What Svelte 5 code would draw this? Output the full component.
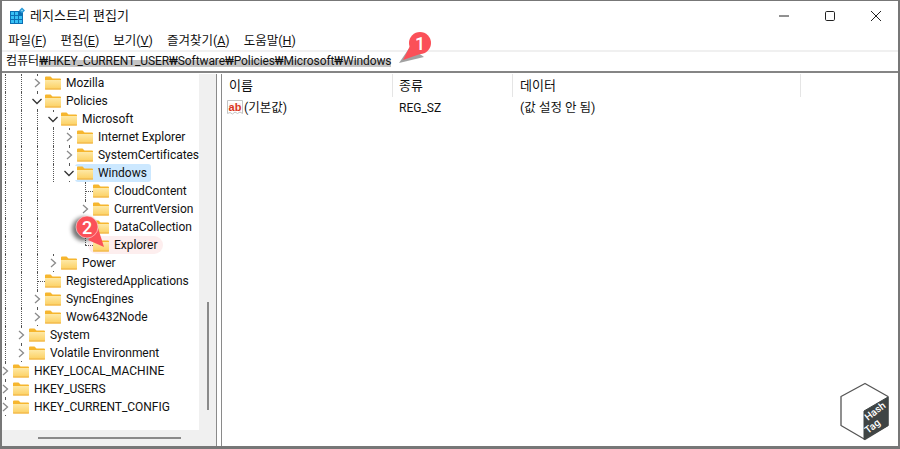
<script>
  // c = guide cells left of the folder: l line, n none, r chevron, o open chevron, t tee, e elbow
  const rows = [
    { c: 'llr', name: 'Mozilla' },
    { c: 'llo', name: 'Policies' },
    { c: 'lllo', name: 'Microsoft' },
    { c: 'llllr', name: 'Internet Explorer' },
    { c: 'llllr', name: 'SystemCertificates' },
    { c: 'llllo', name: 'Windows', cls: 'selected' },
    { c: 'lllnnt', name: 'CloudContent' },
    { c: 'lllnnr', name: 'CurrentVersion' },
    { c: 'lllnnt', name: 'DataCollection' },
    { c: 'lllnne', name: 'Explorer', cls: 'marked' },
    { c: 'lllr', name: 'Power' },
    { c: 'llt', name: 'RegisteredApplications' },
    { c: 'llr', name: 'SyncEngines' },
    { c: 'llr', name: 'Wow6432Node' },
    { c: 'lr', name: 'System' },
    { c: 'lr', name: 'Volatile Environment' },
    { c: 'r', name: 'HKEY_LOCAL_MACHINE' },
    { c: 'r', name: 'HKEY_USERS' },
    { c: 'r', name: 'HKEY_CURRENT_CONFIG' }
  ]
  const menus = [
    ['파일(', 'F', ')'],
    ['편집(', 'E', ')'],
    ['보기(', 'V', ')'],
    ['즐겨찾기(', 'A', ')'],
    ['도움말(', 'H', ')']
  ]
</script>

<div class="window">
  <header class="titlebar">
    <svg class="app-icon" width="16" height="17" viewBox="0 0 16 17">
      <rect x="1" y="4" width="13" height="13" fill="#0b6fb3" />
      <path d="M2 5h3v3H2zM6 5h3v3H6zM2 9h3v3H2zM6 9h3v3H6zM10 9h3v3h-3zM2 13h3v3H2zM6 13h3v3H6zM10 13h3v3h-3z" fill="#37c0f5" />
      <path d="M13 0.500l3 3-3 3-3-3z" fill="#2a9ad8" />
      <path d="M13 2.500l1 1-1 1-1-1z" fill="#a8e2fb" />
    </svg>
    <span class="title">레지스트리 편집기</span>
    <div class="controls">
      <svg width="10" height="10" viewBox="0 0 10 10"><path d="M0 5h10" stroke="#222" /></svg>
      <svg width="10" height="10" viewBox="0 0 10 10"><rect x=".5" y=".5" width="9" height="9" rx="1.2" fill="none" stroke="#222" /></svg>
      <svg width="10" height="10" viewBox="0 0 10 10"><path d="M0 0l10 10M10 0L0 10" stroke="#222" /></svg>
    </div>
  </header>

  <nav class="menubar">
    {#each menus as m}
      <span class="menu">{m[0]}<u>{m[1]}</u>{m[2]}</span>
    {/each}
  </nav>

  <div class="address">
    <span>컴퓨터</span><span class="marker">₩HKEY_CURRENT_USER₩Software₩Policies₩Microsoft₩Windows</span>
  </div>

  <main class="panes">
    <section class="tree">
      <div class="tree-view">
        <div class="tree-rows">
          {#each rows as row}
            <div class="row">
              {#each row.c.split('') as cell}
                <span class="cell {cell}">
                  {#if cell === 'r'}
                    <svg width="16" height="14" viewBox="0 0 16 14"><rect width="16" height="14" fill="#fff" /><path d="M6 3l4.500 4L6 11" fill="none" stroke="#8a8a8a" stroke-width="1.300" /></svg>
                  {:else if cell === 'o'}
                    <svg width="16" height="14" viewBox="0 0 16 14"><rect width="16" height="14" fill="#fff" /><path d="M3.500 5l4.500 4.500L12.500 5" fill="none" stroke="#333" stroke-width="1.300" /></svg>
                  {/if}
                </span>
              {/each}
              <span class="item {row.cls || ''}">
                <svg class="folder" width="16" height="14" viewBox="0 0 16 14">
                  <defs>
                    <linearGradient id="body" x1="0" y1="0" x2="0" y2="1">
                      <stop offset="0" stop-color="#fee9a6" />
                      <stop offset="1" stop-color="#fccf5f" />
                    </linearGradient>
                  </defs>
                  <path d="M0 1.500a1 1 0 0 1 1-1h4.500l2 2H15a1 1 0 0 1 1 1v2H0z" fill="#f6b62e" />
                  <path d="M0 4h16v8.500a1 1 0 0 1-1 1H1a1 1 0 0 1-1-1z" fill="url(#body)" />
                  <path d="M0 13h16" stroke="#efb040" />
                </svg>
                <span class="name">{row.name}</span>
              </span>
            </div>
          {/each}
        </div>
        <div class="vscroll"><i></i></div>
      </div>
      <div class="hscroll"><i></i></div>
    </section>

    <section class="list">
      <div class="list-head">
        <span class="col c1">이름</span>
        <span class="col c2">종류</span>
        <span class="col c3">데이터</span>
        <span class="col c4"></span>
      </div>
      <div class="list-row">
        <span class="c1 first">
          <svg width="16" height="16" viewBox="0 0 16 16">
            <path d="M.5.500h15v13l-2.500-1.500-2.500 1.500-2.500-1.500-2.500 2-2.500-1.500-2.500 1z" fill="#fff" stroke="#c4c4c4" />
            <rect x="2" y="3" width="12" height="8" fill="#fdf3f0" />
            <text x="8" y="10.500" class="ab">ab</text>
          </svg>
          <span class="ko">(기본값)</span>
        </span>
        <span class="c2">REG_SZ</span>
        <span class="c3 ko">(값 설정 안 됨)</span>
      </div>
    </section>
  </main>

  <svg class="logo" width="52" height="60" viewBox="0 0 52 60">
    <path d="M27 1.500L50 14.500v29L27 57.500 3 43.500v-29z" fill="#fff" stroke="#555" stroke-width="1.300" stroke-linejoin="round" />
    <path d="M50 15v28.500L26 57.500V29z" fill="#3f4444" stroke="#3f4444" stroke-linejoin="round" />
    <text class="logo-text" transform="translate(30 39) rotate(-38)">Hash</text>
    <text class="logo-text" transform="translate(30 52) rotate(-38)">Tag</text>
  </svg>

  <svg class="callout one" width="44" height="44" viewBox="0 0 44 44">
    <path d="M3 34L14 18l14 10z" fill="#6f6f6f" opacity=".65" />
    <path d="M7 31l8-16 12 9z" fill="#fb5058" />
    <circle cx="24" cy="14" r="11" fill="#fb5058" />
    <text x="24" y="20.500" class="num">1</text>
  </svg>
  <svg class="callout two" width="50" height="50" viewBox="0 0 50 50">
    <circle cx="18" cy="19" r="12" fill="#000" opacity=".55" class="blur" />
    <path d="M38 37L22 30l10-12z" fill="#fb5058" />
    <circle cx="21" cy="17" r="11" fill="#fb5058" stroke="#fff" stroke-width=".5" />
    <text x="21" y="23.500" class="num">2</text>
  </svg>
</div>

<style>
  :global(body) {
    margin: 0;
    background: #fff;
  }

  .window {
    position: relative;
    width: 900px;
    height: 449px;
    box-sizing: border-box;
    display: flex;
    flex-direction: column;
    overflow: hidden;
    border: 2px solid #777;
    border-bottom-width: 3px;
    border-top-width: 1px;
    background: #fff;
    color: #111;
    font: 12px/18px Roboto, "Noto Sans CJK KR", sans-serif;
  }

  .titlebar {
    height: 29px;
    display: flex;
    align-items: center;
    padding-left: 7px;
    flex: none;
  }

  .title {
    font-size: 13px;
  }

  .app-icon {
    margin-right: 5px;
  }

  .controls {
    margin-left: auto;
    display: flex;
    gap: 36px;
    padding-right: 17px;
  }

  .menubar {
    flex: none;
    display: flex;
    align-items: center;
    padding: 2px 0 0 6px;
    box-sizing: border-box;
    height: 22px;
    border-bottom: 2px solid #f0f0f0;
    font-size: 12.500px;
  }

  .menu {
    margin-right: 14px;
  }

  .address {
    height: 19px;
    flex: none;
    padding-left: 4px;
    line-height: 19px;
    border-bottom: 2px solid #858585;
    white-space: nowrap;
  }

  .marker {
    letter-spacing: -0.1px;
    background: linear-gradient(transparent 45%, #c4c4c4 45%, #c4c4c4 90%, transparent 90%);
  }

  .panes {
    flex: 1;
    min-height: 0;
    display: flex;
    margin-top: 1px;
  }

  .tree {
    width: 214px;
    flex: none;
    display: flex;
    flex-direction: column;
    border-right: 1px solid #8a8a8a;
  }

  .tree-view {
    flex: 1;
    min-height: 0;
    display: flex;
    overflow: hidden;
  }

  .tree-rows {
    flex: 1;
    min-width: 0;
    overflow: hidden;
    margin-left: -5px;
  }

  .row {
    height: 18px;
    display: flex;
    white-space: nowrap;
  }

  .cell {
    position: relative;
    width: 16px;
    height: 18px;
    flex: none;
  }

  .cell svg {
    position: absolute;
    left: 0;
    top: 2px;
  }

  .l::before,
  .r::before,
  .o::before,
  .t::before,
  .e::before {
    content: "";
    position: absolute;
    left: 8px;
    top: 0;
    bottom: 0;
    border-left: 1px dotted #555;
  }

  .e::before {
    bottom: 9px;
  }

  .t::after,
  .e::after {
    content: "";
    position: absolute;
    left: 8px;
    right: 0;
    top: 9px;
    border-top: 1px dotted #555;
  }

  .item {
    display: flex;
    align-items: center;
    height: 18px;
    padding-right: 4px;
    border-radius: 3px;
  }

  .folder {
    margin-right: 5px;
    flex: none;
  }

  .name {
    letter-spacing: -0.03px;
  }

  .selected {
    background: #cce8ff;
    margin-left: -2px;
    padding-left: 2px;
  }

  .marked {
    background: #fdeeee;
    margin-left: -5px;
    padding-left: 5px;
    padding-right: 6px;
    border-radius: 9px;
  }

  .vscroll {
    width: 17px;
    flex: none;
    background: #f0f0f0;
    display: flex;
    justify-content: center;
    padding-top: 228px;
    box-sizing: border-box;
  }

  .vscroll i {
    display: block;
    width: 2px;
    height: 108px;
    background: #8a8a8a;
  }

  .hscroll {
    height: 16px;
    flex: none;
    background: #f0f0f0;
    padding: 7px 0 0 36px;
    box-sizing: border-box;
  }

  .hscroll i {
    display: block;
    width: 143px;
    height: 2px;
    background: #8a8a8a;
  }

  .list {
    flex: 1;
    margin-left: 4px;
    border-left: 1px solid #8a8a8a;
  }

  .list-head {
    height: 23px;
    display: flex;
    font-size: 13px;
  }

  .col {
    border-right: 1px solid #e5e5e5;
    height: 23px;
    line-height: 23px;
    box-sizing: border-box;
  }

  .list-head .col,
  .list-row > span {
    flex: none;
    padding-left: 7px;
    box-sizing: border-box;
  }

  .list-head .c2,
  .list-row .c2 {
    padding-left: 6px;
  }

  .c1 { width: 171px; }
  .c2 { width: 120px; }
  .c3 { width: 288px; }
  .c4 { width: 10px; border-right: 0; }

  .list-row {
    height: 22px;
    display: flex;
    align-items: center;
  }

  .list-row .first {
    display: flex;
    align-items: center;
    gap: 1px;
    padding-left: 5px;
  }

  .ko {
    font-size: 12.500px;
  }

  .ab {
    font: bold 11px "Liberation Sans", sans-serif;
    fill: #d9361e;
    text-anchor: middle;
  }

  .logo {
    position: absolute;
    left: 836px;
    top: 381px;
  }

  .logo-text {
    font: 500 10px Roboto, sans-serif;
    fill: #fff;
  }

  .callout {
    position: absolute;
    overflow: visible;
  }

  .one {
    left: 394px;
    top: 28px;
  }

  .two {
    left: 64px;
    top: 209px;
  }

  .blur {
    filter: blur(2px);
  }

  .num {
    font: 500 18px Roboto, sans-serif;
    fill: #fff;
    text-anchor: middle;
  }
</style>
